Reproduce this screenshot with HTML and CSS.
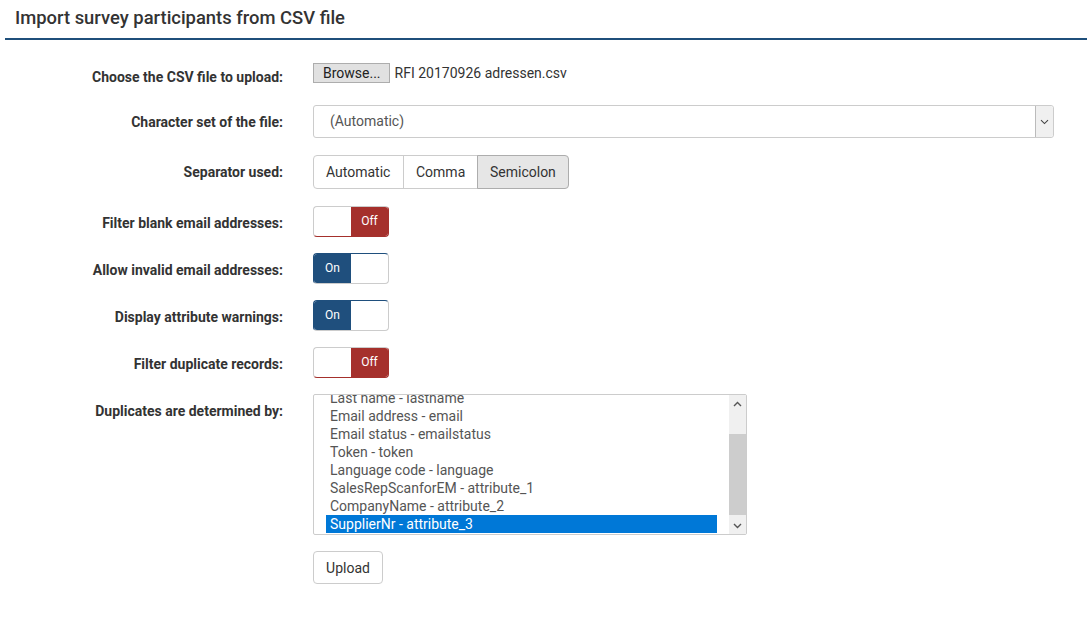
FILE: index.html
```html
<!DOCTYPE html>
<html>
<head>
<meta charset="utf-8">
<title>Import survey participants from CSV file</title>
<link rel="stylesheet" href="styles.css">
</head>
<body>

<h3 class="pagetitle">Import survey participants from CSV file</h3>

<form class="form-horizontal">

<div class="form-group row-file">
  <label class="control-label">Choose the CSV file to upload:</label>
  <div class="controls file-field">
    <span class="browse">Browse...</span>
    <span class="filename">RFI 20170926 adressen.csv</span>
  </div>
</div>

<div class="form-group row-select">
  <label class="control-label">Character set of the file:</label>
  <div class="controls">
    <div class="fake-select">
      <span>(Automatic)</span>
      <span class="select-arrow">
        <svg width="9" height="6" viewBox="0 0 9 6"><path d="M1 1.2 L4.5 4.6 L8 1.2" fill="none" stroke="#444" stroke-width="1.1"/></svg>
      </span>
    </div>
  </div>
</div>

<div class="form-group row-sep">
  <label class="control-label">Separator used:</label>
  <div class="controls">
    <div class="btn-group">
      <span class="btn">Automatic</span>
      <span class="btn">Comma</span>
      <span class="btn active">Semicolon</span>
    </div>
  </div>
</div>

<div class="form-group row-toggle">
  <label class="control-label">Filter blank email addresses:</label>
  <div class="controls">
    <div class="toggle off"><span class="half"></span><span class="half off-half">Off</span></div>
  </div>
</div>

<div class="form-group row-toggle">
  <label class="control-label">Allow invalid email addresses:</label>
  <div class="controls">
    <div class="toggle on"><span class="half on-half">On</span><span class="half"></span></div>
  </div>
</div>

<div class="form-group row-toggle">
  <label class="control-label">Display attribute warnings:</label>
  <div class="controls">
    <div class="toggle on"><span class="half on-half">On</span><span class="half"></span></div>
  </div>
</div>

<div class="form-group row-toggle">
  <label class="control-label">Filter duplicate records:</label>
  <div class="controls">
    <div class="toggle off"><span class="half"></span><span class="half off-half">Off</span></div>
  </div>
</div>

<div class="form-group row-list">
  <label class="control-label">Duplicates are determined by:</label>
  <div class="controls">
    <div class="listbox">
      <div class="list-items">
        <div class="item">Last name - lastname</div>
        <div class="item">Email address - email</div>
        <div class="item">Email status - emailstatus</div>
        <div class="item">Token - token</div>
        <div class="item">Language code - language</div>
        <div class="item">SalesRepScanforEM - attribute_1</div>
        <div class="item">CompanyName - attribute_2</div>
        <div class="item selected">SupplierNr - attribute_3</div>
      </div>
      <div class="scrollbar">
        <span class="sb-arrow">
          <svg width="9" height="6" viewBox="0 0 9 6"><path d="M1 5 L4.5 1.5 L8 5" fill="none" stroke="#555" stroke-width="1.4"/></svg>
        </span>
        <span class="sb-track"><span class="sb-thumb"></span></span>
        <span class="sb-arrow">
          <svg width="9" height="6" viewBox="0 0 9 6"><path d="M1 1 L4.5 4.5 L8 1" fill="none" stroke="#555" stroke-width="1.4"/></svg>
        </span>
      </div>
    </div>
  </div>
</div>

<div class="form-group row-submit">
  <span class="control-label"></span>
  <div class="controls">
    <span class="btn upload">Upload</span>
  </div>
</div>

</form>

</body>
</html>
```

FILE: styles.css
```css
* {
  box-sizing: border-box;
}

body {
  margin: 0;
  background: #fff;
  font-family: Roboto, "Liberation Sans", Arial, sans-serif;
  font-size: 14px;
  color: #333;
}

.pagetitle {
  margin: 0 0 0 5px;
  padding: 7px 10px 0 10px;
  height: 40px;
  font-size: 18.4px;
  font-weight: 500;
  color: #333;
  border-bottom: 2px solid #1f4f7b;
  line-height: 22px;
}

.form-horizontal {
  padding-top: 20px;
}

.form-group {
  display: grid;
  grid-template-columns: 283px 1fr;
  column-gap: 30px;
  align-items: start;
  margin-bottom: 15px;
}

.control-label {
  text-align: right;
  font-weight: bold;
  font-size: 14px;
  line-height: 20px;
  padding-top: 7px;
  color: #333;
}

.controls {
  min-width: 0;
}

.row-file { height: 30px; }
.row-select { height: 35px; }
.row-sep { height: 36px; }
.row-toggle { height: 32px; }
.row-list { height: 142px; }

/* file field */
.file-field {
  display: flex;
  align-items: center;
  padding-top: 3px;
  color: #333;
}

.browse {
  display: inline-block;
  height: 20px;
  line-height: 18px;
  padding: 0 8px 0 9px;
  background: #e1e1e1;
  border: 1px solid #adadad;
  color: #222;
  font-size: 14px;
}

.filename {
  margin-left: 5px;
}

/* select */
.fake-select {
  display: flex;
  justify-content: space-between;
  align-items: stretch;
  width: 741px;
  height: 33px;
  border: 1px solid #ccc;
  border-radius: 3px;
  padding-left: 16px;
  color: #555;
  line-height: 31px;
}

.select-arrow {
  display: flex;
  align-items: center;
  justify-content: center;
  width: 18px;
  border-left: 1px solid #bbb;
  background: #f0f0f0;
  border-radius: 0 3px 3px 0;
}

/* button group */
.btn-group {
  display: inline-flex;
}

.btn {
  display: inline-block;
  height: 34px;
  line-height: 32px;
  padding: 0 12px;
  border: 1px solid #ccc;
  background: #fff;
  color: #333;
}

.btn-group .btn {
  margin-left: -1px;
}

.btn-group .btn:first-child {
  margin-left: 0;
  border-radius: 4px 0 0 4px;
}

.btn-group .btn:last-child {
  border-radius: 0 4px 4px 0;
}

.btn-group .btn:nth-child(1) { width: 91px; }
.btn-group .btn:nth-child(2) { width: 75px; }
.btn-group .btn:nth-child(3) { width: 92px; }

.btn.active {
  background: #e6e6e6;
  border-color: #adadad;
}

/* toggles */
.toggle {
  display: flex;
  width: 76px;
  height: 31px;
  border: 1px solid #ccc;
  border-radius: 4px;
  overflow: hidden;
}

.toggle .half {
  width: 50%;
  font-size: 12px;
  color: #fff;
  text-align: center;
  line-height: 29px;
}

.toggle .off-half {
  background: #a5302c;
}

.toggle .on-half {
  background: #1f4f7d;
}

.toggle.off {
  border-color: #ccc #a5302c #a5302c #ccc;
}

.toggle.on {
  border-color: #1f4f7d #ccc #ccc #1f4f7d;
}

/* listbox */
.listbox {
  display: flex;
  width: 434px;
  height: 141px;
  border: 1px solid #ccc;
  border-radius: 2px;
  overflow: hidden;
}

.list-items {
  flex: 1;
  padding: 0 12px;
  margin-top: -6px;
}

.item {
  height: 18px;
  line-height: 18px;
  padding-left: 4px;
  color: #555;
  white-space: nowrap;
}

.item.selected {
  background: #0078d7;
  color: #fff;
}

.scrollbar {
  display: flex;
  flex-direction: column;
  width: 17px;
  background: #f0f0f0;
}

.sb-arrow {
  display: flex;
  align-items: center;
  justify-content: center;
  height: 17px;
}

.sb-track {
  flex: 1;
  padding-top: 22px;
}

.sb-thumb {
  display: block;
  height: 81px;
  background: #cdcdcd;
}

/* submit */
.row-submit {
  margin-top: 15px;
}

.upload {
  height: 33px;
  width: 70px;
  padding: 0;
  text-align: center;
  border-radius: 4px;
}
```
